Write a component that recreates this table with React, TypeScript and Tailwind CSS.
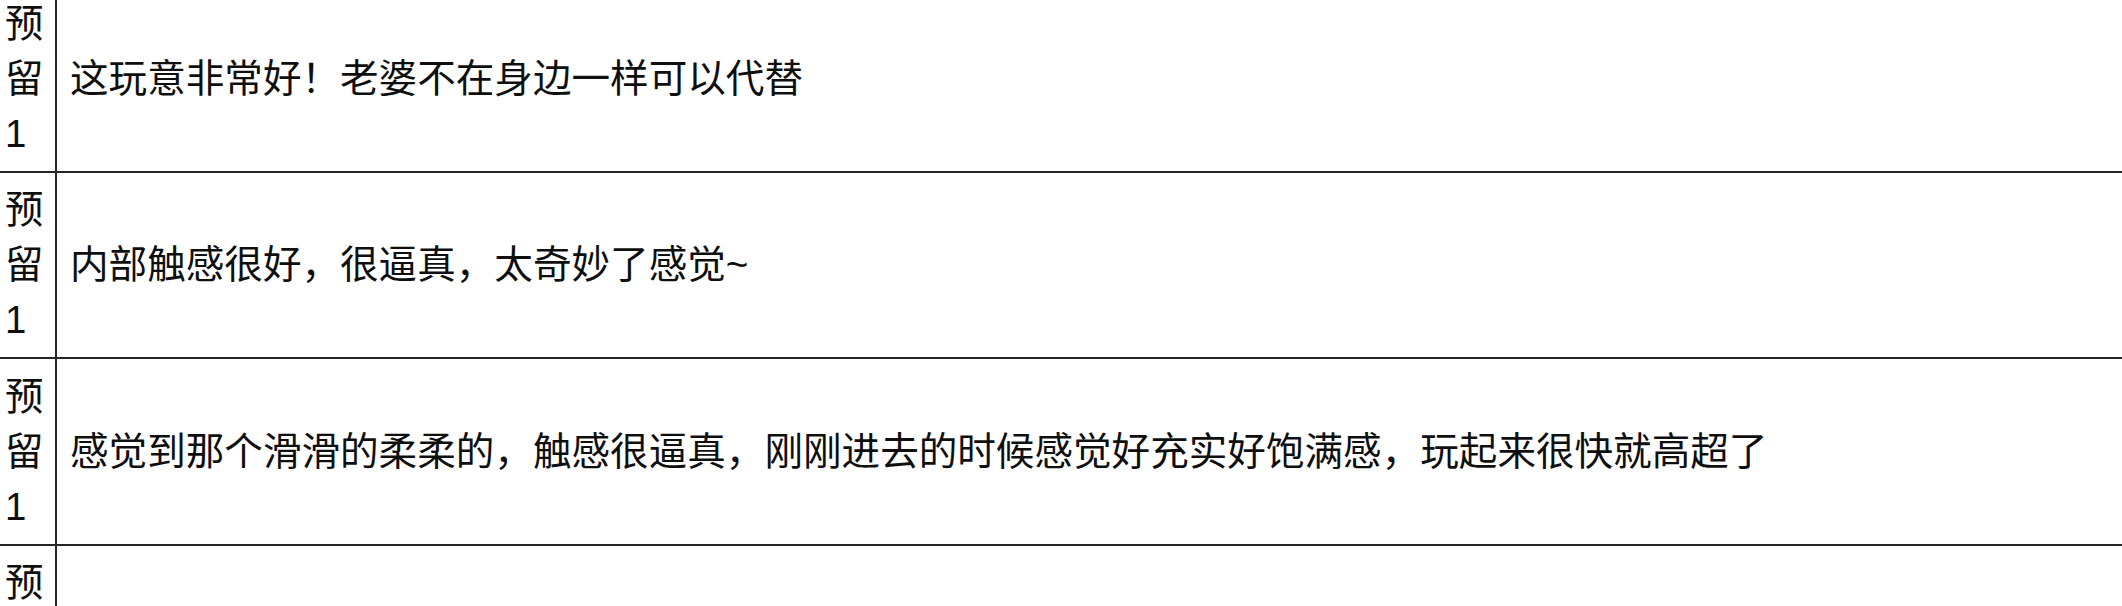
import React from "react";

const rows = [
  "这玩意非常好！老婆不在身边一样可以代替",
  "内部触感很好，很逼真，太奇妙了感觉~",
  "感觉到那个滑滑的柔柔的，触感很逼真，刚刚进去的时候感觉好充实好饱满感，玩起来很快就高超了",
  "",
];

export default function App() {
  return (
    <div
      className="w-[2122px] h-[606px] overflow-hidden bg-white text-[#0f0f0f]"
      style={{ fontFamily: '"Liberation Sans", "Noto Sans CJK SC", sans-serif' }}
    >
      <div className="-mt-[14px] flex flex-col">
        {rows.map((t, i) => (
          <div key={i} className="flex h-[186.5px] shrink-0 border-b-2 border-[#262626]">
            <div className="flex w-[57px] shrink-0 flex-col justify-center border-r-2 border-[#262626] pl-[5px] text-[38.4px] leading-[55px]">
              <span>预</span>
              <span>留</span>
              <span>1</span>
            </div>
            <div className="flex flex-1 items-center pl-[13px] text-[38.6px] leading-[55px] whitespace-nowrap">
              {t}
            </div>
          </div>
        ))}
      </div>
    </div>
  );
}
